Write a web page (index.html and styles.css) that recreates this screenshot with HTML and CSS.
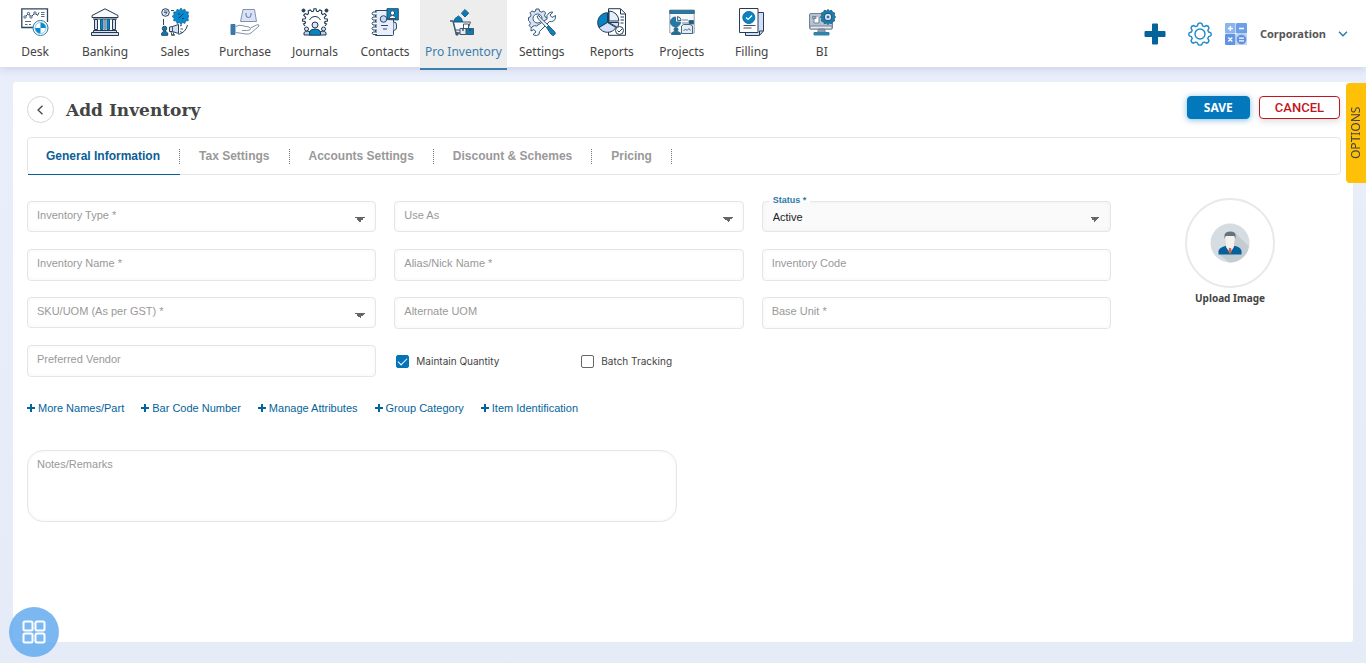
FILE: index.html
```html
<!DOCTYPE html>
<html lang="en">
<head>
<meta charset="utf-8">
<meta name="viewport" content="width=device-width, initial-scale=1">
<title>Add Inventory</title>
<link rel="stylesheet" href="styles.css">
</head>
<body>
<header class="topbar">
  <nav class="nav">
    <a class="nav-item" href="#">
      <svg class="nav-icon" viewBox="0 0 28 28" fill="none" stroke="#2c4560"><path d="M12 19.5H.8V.8h25.7V14" stroke-width="1.300"/><path d="M3.500 9.500l4-4 2.500 3.500 4-4 2.500 2.500 1.500-3" stroke-width="1"/><g fill="#fff" stroke-width=".8"><circle cx="4" cy="9" r="1.200"/><circle cx="7.500" cy="5.500" r="1.200"/><circle cx="10" cy="9" r="1.200"/><circle cx="14" cy="5" r="1.200"/></g><path d="M20 4.500h3.500M20 6.500h3.500M20 8.500h3.500M4 13.500h6M4 16.500h2.500M8 16.500h2" stroke-width=".8"/><circle cx="19.500" cy="20" r="7.500" fill="#fff" stroke="#2879ab"/><path d="M19.500 14.500V20H25a5.500 5.500 0 0 0-5.500-5.500zM19.500 20v5.500A5.500 5.500 0 0 1 14 20z" fill="#078bd0" stroke="none"/><circle cx="19.500" cy="20" r="5.500" stroke="#5caedc" stroke-width=".7"/></svg>
      <span>Desk</span></a>
    <a class="nav-item" href="#">
      <svg class="nav-icon" viewBox="0 0 28 28" fill="none" stroke="#24394d" stroke-width="1"><path d="M14 .8L27 7.500v2H1v-2z" fill="#f7fbff"/><path d="M2 11h24"/><path d="M3.500 11.500h3v10h-3zM21.500 11.500h3v10h-3z" fill="#d7def3"/><path d="M9.500 11.500h2.500v10H9.500zM16 11.500h2.500v10H16z" fill="#0788c7" stroke="#0b5d8c"/><path d="M14 11v11M2.500 22.500h23v2h-23z" fill="#d7def3"/><path d="M.5 24.500h27v3H.5z" fill="#d7def3"/></svg>
      <span>Banking</span></a>
    <a class="nav-item" href="#">
      <svg class="nav-icon" viewBox="0 0 28 28" fill="none" stroke="#29465f"><path d="M2.500 11v6M10 2.500h3M26.500 17a13 13 0 0 1-9 9.500M10 27h4" stroke-width="1"/><circle cx="4.500" cy="4.500" r="3.800" fill="#dce3f7"/><path d="M3 3h3.500M3 4.500h3L4.500 6.500" stroke-width=".8"/><path d="M20 0l1.500 2.200 2.500-1 .6 2.500 2.800.2-.5 2.600 1.100 1.800-1.100 1.800.5 2.600-2.800.2-.6 2.500-2.500-1L20 16.700l-1.500-2.200-2.500 1-.6-2.500-2.800-.2.500-2.600-2-1.800 2-1.800-.5-2.600 2.800-.2.600-2.500 2.500 1z" fill="#078bd0" stroke="#1c638e" stroke-width=".7"/><path d="M17.500 10.500l5-5M17 6h2M21 10.500h2" stroke="#153b61" stroke-width="1"/><circle cx="3.500" cy="20.500" r="2.200" fill="#087dbc"/><path d="M.7 27.300V25q2.800-3.500 6 0v2.300z" fill="#087dbc"/><path d="M8.500 19l3-.5 6-2v9l-6-2H8.500z" fill="#d8e0f6"/><path d="M11.500 18.500v5M10 24l1 3h2l-1-3M19 18l2-1M19.500 21h2.500M19 23.500l2 1" stroke-width=".9"/></svg>
      <span>Sales</span></a>
    <a class="nav-item" href="#">
      <svg class="nav-icon nav-icon-wide" viewBox="0 0 30 28" fill="none" stroke="#8494a6" stroke-width="1"><path d="M13 1.500h11.500l2 12h-16z" fill="#d9e2fb"/><path d="M16 5v2q0 2.500 2.500 2.500T21 7V5" stroke="#60778f"/><path d="M6 18.500q3-2 6-1l4 1q4 0 4.500 2t-4 2H12M20.500 20l6-3q3-1 2.500 1l-8 7q-2 1.500-5 1L6 24.500"/><path d="M1 16.500h4v10H1z" fill="#3c79aa" stroke="#3c79aa"/></svg>
      <span>Purchase</span></a>
    <a class="nav-item" href="#">
      <svg class="nav-icon" viewBox="0 0 28 28" fill="none" stroke="#203850"><path d="M4 18l-1.500-2 2-1-.5-1.500-2.500-.5.2-2 2.500-.2.500-1.500-2-2 1.500-1.700 2.300 1 1-1.200-.3-2.500 2-1 1.800 1.800 1.500-.5.500-2.500h2l.5 2.500 1.500.5 1.800-1.800 2 1-.3 2.500 1 1.200 2.300-1 1.500 1.700-2 2 .5 1.500 2.500.2.200 2-2.500.5-.5 1.500 2 1-1.500 2" stroke-width="1.100"/><path d="M8.500 12a6 6 0 0 1 11 0" stroke-width="1"/><circle cx="2.500" cy="2.500" r="1.500" fill="#20445f"/><circle cx="25.500" cy="2.500" r="1.500" fill="#20445f"/><circle cx="14" cy="17" r="3" fill="#d9e2f6"/><path d="M8.500 27.200V24q1-3 5.500-3t5.500 3v3.200z" fill="#0784c4"/><circle cx="5.500" cy="21" r="2" fill="#d9e2f6"/><circle cx="22.500" cy="21" r="2" fill="#d9e2f6"/><path d="M3 27v-2q.5-2.500 5.500-1.500V27zM25 27v-2q-.5-2.500-5.500-1.500V27z" fill="#b8cff0"/></svg>
      <span>Journals</span></a>
    <a class="nav-item" href="#">
      <svg class="nav-icon" viewBox="0 0 28 28" fill="none" stroke="#2c4b68" stroke-width="1"><path d="M4.500 2.500h18v24q0 1-1 1h-17z" fill="#e9eefc"/><path d="M22.500 14q3.500 0 3 3v3q0 2-3 2.500" fill="#d9e2fb"/><path d="M6 4H2q-2 1.500 0 3h4M6 9H2q-2 1.500 0 3h4M6 14H2q-2 1.500 0 3h4M6 19H2q-2 1.500 0 3h4M6 24H2q-2 1 0 2.500h4" fill="#fff"/><circle cx="12.500" cy="11" r="3.300" fill="#c7d8f5"/><path d="M10 17.500h7M12 21h4"/><path d="M16 .7h11.300V12L16 11.500z" fill="#0784c4"/><circle cx="21.500" cy="5" r="2.200" fill="#fff"/><path d="M18 10.500q0-3 3.500-3t3.500 3z" fill="#fff"/></svg>
      <span>Contacts</span></a>
    <a class="nav-item nav-item-active" href="#" aria-current="page">
      <svg class="nav-icon" viewBox="0 0 28 28" fill="none" stroke="#40576a"><path d="M1 13h3l3 12h11" stroke-width="1.500"/><path d="M4.500 14h17l-3 8H6.500z" fill="#f8faff"/><path d="M16 1.500l3.700 3.700L16 9l-3.700-3.800z" fill="#087cb5" stroke="#176189"/><path d="M5 13.500l1-3 3.500-2.500 3 2.500 1 3z" fill="#087cb5" stroke="#176189"/><path d="M14.500 16h5v4.500h-5z" fill="#fff"/><path d="M11 20.500h6v6h-6z" fill="#e2ebf7"/><path d="M17.500 20.500h7v6h-7z" fill="#087cb5"/><path d="M14 20.500v2.500M21 20.500v2.500" stroke="#29465e" stroke-width="1.300"/><circle cx="8" cy="26" r="1.200" fill="#40576a"/></svg>
      <span>Pro Inventory</span></a>
    <a class="nav-item" href="#">
      <svg class="nav-icon" viewBox="0 0 28 28" fill="none" stroke="#365873" stroke-width="1"><path d="M8 1h3l.6 2.300 2 .8L15.700 3l2 2-1.200 2.100.8 2L19.500 10v3l-2.400.6-.8 2 1.200 2.100-2 2-2.200-1.200-2 .8-.6 2.200H8l-.6-2.200-2-.8-2.200 1.200-2-2 1.200-2.200-.8-2L.5 12.500v-3l1.800-.6.8-2-1.200-2 2-2L6 4l1.400-.7z" fill="#d8e1f8"/><circle cx="9.500" cy="10.500" r="4.500" fill="#fff"/><path d="M19 11q-1-4 2-6 2-1.500 4-.8L22 7l2 2.500 3.500-2q.5 4-2 5.500-2 1-4 .5l-10 10q.5 4-3 4-2 .2-3.500-1L8 24l-2-2.500L3 23q-.5-3 1.500-4.500 2-1.500 4-.5z" fill="#f4f7ff"/><path d="M9 8.500l2-1 1 2L21 18l-2 2L10.500 11z" fill="#fff"/><path d="M18.500 19.500l2-2 6.500 6.700q1 2-1 3-1.500.8-3-1z" fill="#0784c4"/></svg>
      <span>Settings</span></a>
    <a class="nav-item" href="#">
      <svg class="nav-icon nav-icon-wide" viewBox="0 0 30 28" fill="none" stroke="#213b53" stroke-width="1"><path d="M11.500.7h12l5 5v21.600h-17z" fill="#fff"/><path d="M23.500 1v5h5M23.500 9H27M23.500 12H27M23.500 15h3"/><path d="M10.500 14.500V4.700A9.900 9.900 0 0 0 2 19.500z" fill="#0784c4"/><path d="M10.500 14.500l8.500 5a9.900 9.900 0 0 1-17 0z" fill="#d5e2fb"/><path d="M12 13V3a9.800 9.800 0 0 1 9.800 10z" fill="#e6edfd"/><path d="M12 14.500h9.800q0 2.500-1.300 5z" fill="#d5e2fb"/><circle cx="22.500" cy="22.500" r="4" fill="#fff"/><path d="M20.500 22.500l1.500 1.500 3-3"/></svg>
      <span>Reports</span></a>
    <a class="nav-item" href="#">
      <svg class="nav-icon" viewBox="0 0 28 28" fill="none" stroke="#426983"><path d="M1.800 2.500h24.400v22.500H1.800z" fill="#f5f8fa" stroke="#8da5b6"/><path d="M1.800 2.200h24.400v3.300H1.800z" fill="#197cac"/><path d="M7.500 9v5h5a5 5 0 1 1-5-5z" fill="#197cac"/><path d="M9.500 8.500a4 4 0 0 1 3.500 4H9.500z" fill="#dce8f8"/><path d="M14 12h6M14 15h6" stroke-width=".8"/><path d="M21 12.500h4.500v3.500H21z" fill="#245c7d"/><circle cx="8" cy="21.500" r="2" fill="#176f9f"/><path d="M3.500 26.500q0-3 4.500-3t4.500 3z" fill="#176f9f"/><path d="M13.500 18l2-1.500h6.500l2.500 1.500v7.500h-11z" fill="#e7edf6"/><path d="M15.500 23l2-2 1.500 1.500 2-2 1.500 2"/></svg>
      <span>Projects</span></a>
    <a class="nav-item" href="#">
      <svg class="nav-icon" viewBox="0 0 28 28" fill="none" stroke="#253e58" stroke-width="1"><path d="M20 4.500h5.500V23l-4 4.500h-14V25z" fill="#d4def6"/><path d="M1.500.5h18.500v24H1.500z" fill="#fff"/><circle cx="10.800" cy="9.500" r="6" fill="#0784c4" stroke="#176997"/><path d="M8 9.500l2 2 4-4" stroke="#fff" stroke-width="1.200"/><path d="M5.500 17.500h12M5.500 20h8" stroke-width=".9"/><path d="M21.500 27v-4H25"/></svg>
      <span>Filling</span></a>
    <a class="nav-item" href="#">
      <svg class="nav-icon" viewBox="0 0 28 28" fill="none" stroke="#718396" stroke-width="1"><rect x="1.500" y="5.500" width="23" height="15.500" rx="1.500" fill="#b7c2d0"/><path d="M2 18h22v3H2z" fill="#e5eaf1"/><path d="M10.500 21h6l1 4h-8z" fill="#8e9cab"/><path d="M6 24.500h15v2.500H6z" fill="#3281ab" stroke="#3281ab"/><path d="M4.500 8.500H8v2H4.500zM6 9v6h5V9" fill="#fff"/><path d="M20 1.500l1.500 1.400 2.200-.6.700 2 2.200.7-.5 2.200L27.500 9l-1.400 1.700.5 2.200-2.200.7-.7 2-2.200-.5L20 16.500l-1.500-1.400-2.200.5-.7-2-2.200-.7.5-2.200L12.500 9l1.400-1.800-.5-2.200 2.200-.7.700-2 2.200.6z" fill="#1681b5" stroke="#2b617f"/><circle cx="20" cy="9" r="3.800" fill="#dbeafa" stroke="#174a6d"/><circle cx="20" cy="9" r="1" stroke="#174a6d"/></svg>
      <span>BI</span></a>
  </nav>
  <div class="tools">
    <button class="icon-button" type="button" aria-label="Add"><svg width="22" height="22" viewBox="0 0 22 22"><path d="M9 .5h4a1 1 0 0 1 1 1V8h6.500a1 1 0 0 1 1 1v4a1 1 0 0 1-1 1H14v6.500a1 1 0 0 1-1 1H9a1 1 0 0 1-1-1V14H1.500a1 1 0 0 1-1-1V9a1 1 0 0 1 1-1H8V1.500a1 1 0 0 1 1-1z" fill="#04639b"/></svg></button>
    <button class="icon-button icon-gear" type="button" aria-label="Preferences"><svg width="24" height="24" viewBox="0 0 24 24" fill="none" stroke="#2188c9" stroke-width="1.400" stroke-linejoin="round"><path d="M10.200 1.500q1.800-1 3.600 0l.7 2.300 1.800.8 2.200-1.100q2.200.5 2.500 2.600l-1.200 2.200.8 1.700 2 .7q1.200 1.800 0 3.200l-2 .8-.8 1.700 1.200 2.200q-.3 2.100-2.500 2.600l-2.200-1.100-1.800.8-.7 1.700q-1.800 1-3.600 0l-.7-1.700-1.800-.8-2.200 1.100Q3.300 20.700 3 18.600l1.200-2.200-.8-1.700-2-.8q-1.200-1.500 0-3.200l2-.7.8-1.700L3 6.100q.3-2.100 2.500-2.600l2.200 1.100 1.800-.8z"/><circle cx="12" cy="12" r="5"/></svg></button>
    <button class="icon-button icon-calc" type="button" aria-label="Calculator"><svg width="22" height="22" viewBox="0 0 22 22"><rect width="10.500" height="10.500" rx="1" fill="#8bb5ed"/><rect x="11" width="11" height="10.500" rx="1" fill="#6d9ee8"/><rect y="11" width="10.500" height="11" rx="1" fill="#6294e4"/><path d="M11 11h11v11H11z" fill="#c1d5f5"/><circle cx="16.500" cy="16.500" r="4.800" fill="#6391df"/><path d="M5.300 3v5M2.800 5.500h5M14 5.500h5M3.300 14.500l4 4M7.300 14.500l-4 4M14 15.200h5M14 17.800h5" stroke="#fff" stroke-width="1.300"/></svg></button>
    <button class="account" type="button">Corporation<svg width="10" height="6" viewBox="0 0 10 6"><path d="M1 .8l4 4 4-4" fill="none" stroke="#217aab" stroke-width="1.300"/></svg></button>
  </div>
</header>

<main class="card">
  <div class="card-head">
    <button class="back" type="button" aria-label="Back"><svg width="12" height="10" viewBox="0 0 12 10"><path d="M7.500.7L3 5l4.500 4.300" fill="none" stroke="#444" stroke-width="1.300"/></svg></button>
    <h1 class="title">Add Inventory</h1>
    <div class="actions">
      <button class="button button-save" type="submit" form="inventory">SAVE</button>
      <button class="button button-cancel" type="button">CANCEL</button>
    </div>
  </div>

  <div class="tabs" role="tablist">
    <button class="tab tab-active" type="button" role="tab" aria-selected="true"><span>General Information</span></button>
    <button class="tab" type="button" role="tab"><span>Tax Settings</span></button>
    <button class="tab" type="button" role="tab"><span>Accounts Settings</span></button>
    <button class="tab" type="button" role="tab"><span>Discount &amp; Schemes</span></button>
    <button class="tab" type="button" role="tab"><span>Pricing</span></button>
  </div>

  <form class="form" id="inventory">
    <div class="form-main">
      <div class="fields">
        <div class="field"><label for="type">Inventory Type *</label><select id="type"><option></option></select></div>
        <div class="field"><label for="use">Use As</label><select id="use"><option></option></select></div>
        <div class="field field-filled"><label for="status">Status *</label><select id="status"><option>Active</option></select></div>
        <div class="field"><label for="name">Inventory Name *</label><input id="name" type="text"></div>
        <div class="field"><label for="alias">Alias/Nick Name *</label><input id="alias" type="text"></div>
        <div class="field"><label for="code">Inventory Code</label><input id="code" type="text"></div>
        <div class="field"><label for="sku">SKU/UOM (As per GST) *</label><select id="sku"><option></option></select></div>
        <div class="field"><label for="alternate">Alternate UOM</label><input id="alternate" type="text"></div>
        <div class="field"><label for="base">Base Unit *</label><input id="base" type="text"></div>
        <div class="field"><label for="vendor">Preferred Vendor</label><input id="vendor" type="text"></div>
        <div class="checks">
          <label class="check"><input type="checkbox" checked>Maintain Quantity</label>
          <label class="check"><input type="checkbox">Batch Tracking</label>
        </div>
      </div>
      <div class="links">
        <a href="#"><svg viewBox="0 0 8 8"><path d="M4 0v8M0 4h8"/></svg>More Names/Part</a>
        <a href="#"><svg viewBox="0 0 8 8"><path d="M4 0v8M0 4h8"/></svg>Bar Code Number</a>
        <a href="#"><svg viewBox="0 0 8 8"><path d="M4 0v8M0 4h8"/></svg>Manage Attributes</a>
        <a href="#"><svg viewBox="0 0 8 8"><path d="M4 0v8M0 4h8"/></svg>Group Category</a>
        <a href="#"><svg viewBox="0 0 8 8"><path d="M4 0v8M0 4h8"/></svg>Item Identification</a>
      </div>
      <div class="field field-notes"><label for="notes">Notes/Remarks</label><textarea id="notes"></textarea></div>
    </div>
    <button class="upload" type="button">
      <span class="upload-ring"><svg width="40" height="40" viewBox="0 0 40 40"><circle cx="20" cy="20" r="19.500" fill="#d5dde2"/><path d="M25 9.500L39 23.500A19.500 19.500 0 0 1 19 39.500L9 31z" fill="#c3ccd1"/><path d="M8.500 31.500v-3.200q0-3.300 7-5.300h10q6 2 6 5.300v3.200z" fill="#06609c"/><path d="M16 20h8v4l-4 6-4-6z" fill="#f2f0e9"/><path d="M15.500 13.500q0-2.500 4.500-2.500t4.700 2.500V18q-1.500 5-4.700 5t-4.500-5z" fill="#f5f2eb"/><path d="M14.500 16v-4q.5-3.500 6-3.500 5 0 5 3.500v4l-1.200-3h-8.600z" fill="#65737d"/><path d="M19 25h2l.8 3.500L20 31.500l-1.500-3z" fill="#c76754"/></svg></span>
      Upload Image
    </button>
  </form>
</main>

<button class="options" type="button">OPTIONS</button>
<button class="launcher" type="button" aria-label="Open apps"><svg width="24" height="24" viewBox="0 0 24 24" fill="none" stroke="#fff" stroke-width="2"><rect x="1.500" y="1.500" width="9" height="9" rx="1.500"/><rect x="13.500" y="1.500" width="9" height="9" rx="1.500"/><rect x="1.500" y="13.500" width="9" height="9" rx="1.500"/><rect x="13.500" y="13.500" width="9" height="9" rx="1.500"/></svg></button>
</body>
</html>
```

FILE: styles.css
```css
* { box-sizing: border-box; }

body {
  margin: 0;
  min-height: 100vh;
  display: flex;
  flex-direction: column;
  background: linear-gradient(#e9eefb, #e5ebf7);
  color: #444;
  font: 11px/16px "Liberation Sans", Arial, sans-serif;
}

button { font: inherit; color: inherit; border: 0; padding: 0; background: none; cursor: pointer; }
svg { display: block; flex-shrink: 0; }
a { text-decoration: none; }

.topbar {
  display: flex;
  height: 67px;
  background: #fff;
  box-shadow: 0 2px 8px rgba(70, 85, 130, .18);
}
.nav { display: flex; }
.nav-item {
  display: flex;
  flex-direction: column;
  align-items: center;
  gap: 7px;
  min-width: 70px;
  height: 70px;
  padding: 8px 5px 0;
  color: #444;
  font: 12px/18px "Noto Sans", "Open Sans", sans-serif;
  white-space: nowrap;
}
.nav-item-active { background: #ededed; border-bottom: 2px solid #3a80af; color: #3a7dab; }
.nav-icon { width: 28px; height: 28px; }
.nav-icon-wide { width: 30px; }

.tools { display: flex; align-items: center; margin-left: auto; padding-right: 18px; }
.icon-gear { margin-left: 22px; }
.icon-calc { margin-left: 13px; }
.account {
  display: flex;
  align-items: center;
  gap: 12px;
  margin-left: 13px;
  color: #555;
  font: bold 11px/16px "Noto Sans", sans-serif;
}

.card {
  flex: 1;
  margin: 15px 13px 21px;
  padding: 14px 12px 14px 14px;
  background: #fff;
  border-radius: 3px;
}
.card-head { display: flex; align-items: center; }
.back {
  display: grid;
  place-items: center;
  width: 27px;
  height: 27px;
  border: 1px solid #d5d5d5;
  border-radius: 50%;
}
.title { margin: 0 0 0 12px; color: #444; font: bold 17px/24px "DejaVu Serif", serif; }
.actions { display: flex; align-self: flex-start; gap: 9px; margin: 0 1px 0 auto; }
.button {
  height: 23px;
  padding: 0 15px;
  border: 1px solid #0478bc;
  border-radius: 4px;
  font: bold 12px/20px "Noto Sans", sans-serif;
}
.button-save { padding: 0 16px; background: #0478bc; color: #fff; box-shadow: 0 1px 6px rgba(4, 120, 188, .5); }
.button-cancel { border-color: #c2161e; background: #fff; color: #c2161e; font: 500 13px/20px Roboto, sans-serif; box-shadow: 0 3px 6px rgba(0, 0, 0, .12); }

.tabs { display: flex; height: 38px; margin-top: 14px; border: 1px solid #e6e6e6; border-radius: 4px; }
.tab {
  display: flex;
  align-items: flex-start;
  height: 37px;
  padding-top: 11px;
  color: #999;
  font-weight: bold;
  font-size: 12px;
  line-height: 15px;
}
.tab span { padding: 0 19px 0 18px; border-right: 1px dotted #777; }
.tab + .tab span { padding-left: 19px; }
.tab-active { border-bottom: 1px solid #0a6096; color: #0a6096; }

.form { display: flex; align-items: flex-start; gap: 8px; margin-top: 26px; }
.form-main { flex: 1; }
.fields { display: grid; grid-template-columns: repeat(3, 1fr); gap: 16px 18px; }
.field { display: grid; align-items: start; min-height: 32px; }
.field > * { grid-area: 1 / 1; }
.field label {
  z-index: 1;
  justify-self: start;
  margin: 6px 0 0 10px;
  color: #999;
  pointer-events: none;
}
.field input, .field select, .field textarea {
  width: 100%;
  height: 32px;
  padding: 0 10px;
  border: 1px solid #e6e6e6;
  border-radius: 4px;
  background: #fff;
  box-shadow: inset 0 0 5px rgba(0, 0, 0, .04);
  color: #222;
  font: inherit;
  outline: 0;
}
.field select {
  height: 31px;
  appearance: none;
  background:
    linear-gradient(to bottom left, #666 50%, transparent 50%) no-repeat right 10px top 15px / 5px 5px,
    linear-gradient(to bottom right, #666 50%, transparent 50%) no-repeat right 15px top 15px / 5px 5px,
    #fff;
  background-position: right 15px top 15px, right 10px top 15px;
}
.field-filled label { margin: -9px 0 0 7px; padding: 0 4px; background: linear-gradient(#fff 10px, #fafafa 10px); color: #2b7aa8; font-weight: bold; font-size: 9px; }
.field-filled select { background-color: #fafafa; }

.checks { grid-column: span 2; display: flex; align-items: center; padding-left: 2px; }
.check { display: flex; align-items: center; gap: 7px; width: 185px; color: #444; font: 10px/16px Inter, sans-serif; }
.check input { appearance: none; display: grid; place-items: center; width: 13px; height: 13px; margin: 0; border: 1px solid #666; border-radius: 2px; }
.check input:checked { border-color: #0474b9; background: #0474b9; }
.check input:checked::before {
  content: "";
  width: 8px;
  height: 4px;
  border: solid #fff;
  border-width: 0 0 1px 1px;
  transform: translateY(-1px) rotate(-45deg);
}

.links { display: flex; gap: 17px; margin-top: 23px; }
.links a { display: flex; align-items: center; gap: 3px; color: #04639b; }
.links svg { width: 8px; height: 8px; stroke: #04639b; stroke-width: 2; }

.field-notes { width: 60%; margin-top: 34px; }
.field-notes textarea { display: block; height: 72px; padding: 6px 10px; border-radius: 16px; resize: none; }

.upload {
  display: flex;
  flex: 0 0 222px;
  flex-direction: column;
  align-items: center;
  gap: 2px;
  margin-top: -3px;
  color: #444;
  font: bold 10px/16px "Noto Sans", sans-serif;
}
.upload-ring { display: grid; place-items: center; width: 90px; height: 90px; border: 2px solid #e8eaea; border-radius: 50%; }

.options {
  position: fixed;
  top: 83px;
  right: 0;
  width: 20px;
  height: 100px;
  border-radius: 0 4px 4px 0;
  background: #ffc107;
  color: #444;
  font: 12px/20px "Noto Sans", sans-serif;
  text-align: center;
  writing-mode: vertical-rl;
  transform: rotate(180deg);
}
.launcher {
  position: fixed;
  left: 9px;
  bottom: 6px;
  display: grid;
  place-items: center;
  width: 50px;
  height: 50px;
  border-radius: 50%;
  background: rgba(100, 172, 240, .85);
}
```
